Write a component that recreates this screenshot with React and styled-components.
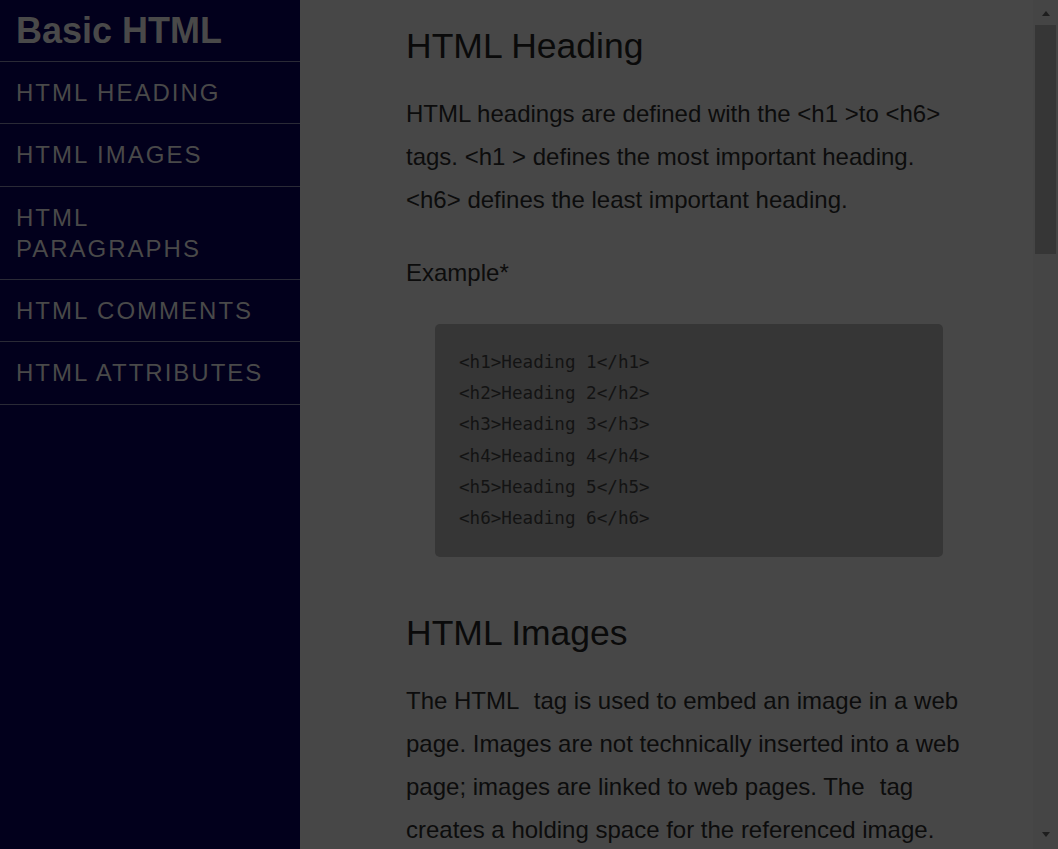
import styled, { createGlobalStyle } from "styled-components";

const GlobalStyle = createGlobalStyle`
  html, body {
    margin: 0;
    padding: 0;
    height: 100%;
    overflow: hidden;
  }
  body {
    background: #474747;
    font-family: "Liberation Sans", Arial, sans-serif;
  }
`;

// page shell
const Page = styled.div`
  display: flex;
  height: 100vh;
  width: 100vw;
`;

const Sidebar = styled.nav`
  width: 300px;
  flex: 0 0 300px;
  background: #02001c;
  display: flex;
  flex-direction: column;
`;

const Title = styled.h1`
  margin: 0;
  padding: 10px 16px;
  font-size: 36px;
  line-height: 41px;
  font-weight: 700;
  color: #494949;
  border-bottom: 1px solid #2a2a36;
`;

const NavLink = styled.a`
  display: block;
  padding: 15px 24px 15px 16px;
  font-size: 24px;
  line-height: 31.3px;
  letter-spacing: 2px;
  color: #494949;
  text-decoration: none;
  text-transform: uppercase;
  border-bottom: 1px solid #2a2a36;
`;

const Main = styled.main`
  flex: 1;
  display: flex;
  min-width: 0;
  background: #474747;
`;

const Content = styled.div`
  flex: 1;
  overflow: hidden;
`;

// window scrollbar drawn as a rail at the right edge
const ScrollRail = styled.div`
  width: 25px;
  flex: 0 0 25px;
  display: flex;
  flex-direction: column;
  background: #454545;
`;

const ScrollButton = styled.div`
  height: 25px;
  flex: 0 0 25px;
  display: flex;
  justify-content: center;
  align-items: ${(p) => (p.$down ? "flex-start" : "flex-end")};
  padding: ${(p) => (p.$down ? "8px 0 0" : "0 0 9px")};
  box-sizing: border-box;
`;

const Arrow = styled.span`
  width: 0;
  height: 0;
  border-left: 4.5px solid transparent;
  border-right: 4.5px solid transparent;
  ${(p) =>
    p.$down
      ? "border-top: 5px solid #1e1e1e;"
      : "border-bottom: 5px solid #1e1e1e;"}
`;

const ScrollTrack = styled.div`
  flex: 1;
  padding: 0 2px;
`;

const ScrollThumb = styled.div`
  height: 229px;
  background: #363636;
`;

const Article = styled.article`
  width: 560px;
  margin-left: 106px;
`;

const Section = styled.section`
  padding-top: 26px;
`;

const Heading = styled.h2`
  margin: 0 0 25px;
  font-size: 35.5px;
  line-height: 41px;
  font-weight: 400;
  color: #0a0a0a;
`;

const Text = styled.p`
  margin: 0 0 30px;
  font-size: 24px;
  line-height: 43px;
  color: #0c0c0c;
`;

const ImgGap = styled.span`
  display: inline-block;
  width: 2px;
`;

const Code = styled.pre`
  margin: 0 23px 30px 29px;
  padding: 23px 24px 23px;
  background: #363636;
  border-radius: 5px;
  font-family: "DejaVu Sans Mono", "Liberation Mono", monospace;
  font-size: 17.6px;
  line-height: 31.2px;
  color: #131313;
  white-space: pre-wrap;
`;

const navItems = [
  { id: "heading", label: "HTML Heading" },
  { id: "images", label: "HTML Images" },
  { id: "paragraphs", label: "HTML Paragraphs" },
  { id: "comments", label: "HTML Comments" },
  { id: "attributes", label: "HTML Attributes" },
];

const headingCode = [1, 2, 3, 4, 5, 6]
  .map((n) => `<h${n}>Heading ${n}</h${n}>`)
  .join("\n");

function App() {
  return (
    <>
      <GlobalStyle />
      <Page>
        <Sidebar>
          <Title>Basic HTML</Title>
          {navItems.map((item) => (
            <NavLink key={item.id} href={"#" + item.id}>
              {item.label}
            </NavLink>
          ))}
        </Sidebar>
        <Main>
          <Content>
            <Article>
              <Section id="heading">
                <Heading>HTML Heading</Heading>
                <Text>
                  HTML headings are defined with the &lt;h1 &gt;to &lt;h6&gt;
                  tags. &lt;h1 &gt; defines the most important heading.
                  &lt;h6&gt; defines the least important heading.
                </Text>
                <Text>Example*</Text>
                <Code>{headingCode}</Code>
              </Section>
              <Section id="images">
                <Heading>HTML Images</Heading>
                <Text>
                  The HTML <ImgGap /> tag is used to embed an image in a web
                  page. Images are not technically inserted into a web page;
                  images are linked to web pages. The <ImgGap /> tag creates a
                  holding space for the referenced image.
                </Text>
                <Text>Example*</Text>
                <Code>{'<img src="pic_trulli.jpg" alt="Italian Trulli">'}</Code>
              </Section>
              <Section id="paragraphs">
                <Heading>HTML Paragraphs</Heading>
                <Text>
                  The HTML &lt;p&gt; element defines a paragraph. A paragraph
                  always starts on a new line, and browsers automatically add
                  some white space before and after a paragraph.
                </Text>
              </Section>
            </Article>
          </Content>
          <ScrollRail>
            <ScrollButton>
              <Arrow />
            </ScrollButton>
            <ScrollTrack>
              <ScrollThumb />
            </ScrollTrack>
            <ScrollButton $down>
              <Arrow $down />
            </ScrollButton>
          </ScrollRail>
        </Main>
      </Page>
    </>
  );
}

export default App;
